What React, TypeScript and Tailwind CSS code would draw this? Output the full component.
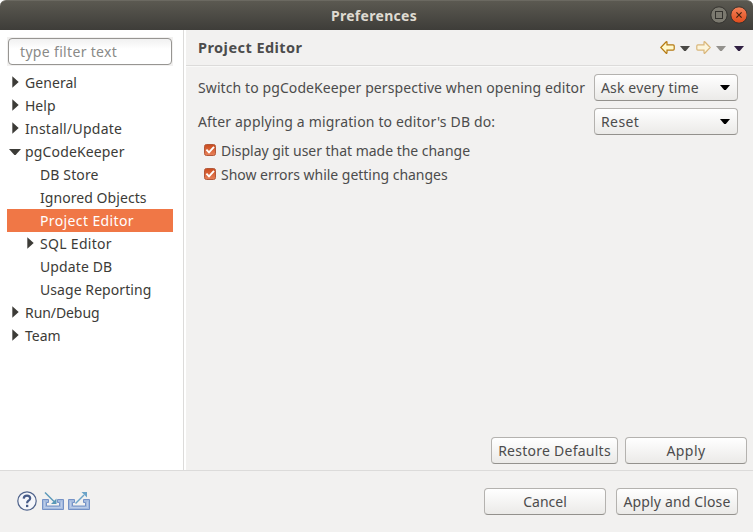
import React from "react";

const RightTriangle = () => (
  <svg width="7" height="12" viewBox="0 0 7 12" className="-mt-px block">
    <path d="M0.3 0.3 6.7 6 0.3 11.7z" fill="#3c3b37" />
  </svg>
);

const DownTriangle = ({ color = "#3c3b37", className = "" }: { color?: string; className?: string }) => (
  <svg width="10" height="5" viewBox="0 0 10 5" className={"block shrink-0 " + className}>
    <path d="M0 0h10L5.8 5H4.2z" fill={color} />
  </svg>
);

type Row = { label: string; level: number; state?: "open" | "closed"; selected?: boolean; tracking: string };

const rows: Row[] = [
  { label: "General", level: 0, state: "closed", tracking: "tracking-[0.06px]" },
  { label: "Help", level: 0, state: "closed", tracking: "tracking-[0px]" },
  { label: "Install/Update", level: 0, state: "closed", tracking: "tracking-[0.25px]" },
  { label: "pgCodeKeeper", level: 0, state: "open", tracking: "tracking-[0.15px]" },
  { label: "DB Store", level: 1, tracking: "tracking-[0.12px]" },
  { label: "Ignored Objects", level: 1, tracking: "tracking-[0.06px]" },
  { label: "Project Editor", level: 1, selected: true, tracking: "tracking-[0.38px]" },
  { label: "SQL Editor", level: 1, state: "closed", tracking: "tracking-[0.3px]" },
  { label: "Update DB", level: 1, tracking: "tracking-[0.12px]" },
  { label: "Usage Reporting", level: 1, tracking: "tracking-[0.07px]" },
  { label: "Run/Debug", level: 0, state: "closed", tracking: "tracking-[-0.08px]" },
  { label: "Team", level: 0, state: "closed", tracking: "tracking-[0px]" },
];

function TreeRow({ row }: { row: Row }) {
  return (
    <div
      className={
        "flex h-[23px] items-center " +
        (row.level === 1 ? "pl-[15px] " : "") +
        (row.selected ? "bg-[#f07746] text-white" : "text-[#3c3b37]")
      }
    >
      <span className={"flex w-[18px] shrink-0 " + (row.state === "open" ? "pl-[3px]" : "pl-[5px]")}>
        {row.state === "closed" && <RightTriangle />}
        {row.state === "open" && (
          <svg width="12" height="6" viewBox="0 0 12 6" className="-ml-px block shrink-0">
            <path d="M0 0h12L6.6 6H5.4z" fill="#3c3b37" />
          </svg>
        )}
      </span>
      <span className={"whitespace-nowrap leading-[23px] " + row.tracking}>{row.label}</span>
    </div>
  );
}

const face =
  "flex h-[27px] items-center rounded-[4px] border border-[#b4b2af] border-b-[#93918d] bg-linear-to-b from-white to-[#ebeae8] text-[#4c4c4c] whitespace-nowrap ";

function Button({ label, className }: { label: string; className: string }) {
  return (
    <button className={face + "justify-center " + className}>
      <span>{label}</span>
    </button>
  );
}

function Select({ value, className }: { value: string; className: string }) {
  return (
    <button className={face + "w-[144px] justify-between pr-[7px] pl-[6px] " + className}>
      <span>{value}</span>
      <DownTriangle color="#000000" />
    </button>
  );
}

function Check({ label, className }: { label: string; className: string }) {
  return (
    <label className="flex h-6 items-center whitespace-nowrap">
      <svg width="12" height="12" viewBox="0 0 12 12" className="mr-[5px] block">
        <defs>
          <linearGradient id="tick" x1="0" y1="0" x2="0" y2="1">
            <stop offset="0" stopColor="#c94a1c" />
            <stop offset="1" stopColor="#e9825a" />
          </linearGradient>
        </defs>
        <rect x="0.5" y="0.5" width="11" height="11" rx="2" fill="url(#tick)" stroke="#b3583a" />
        <path d="M2.4 5.6 5 8.3 10 2.8" fill="none" stroke="#fff" strokeWidth="1.9" />
      </svg>
      <span className={className}>{label}</span>
    </label>
  );
}

function Arrow({ dim = false }: { dim?: boolean }) {
  return (
    <svg width="15" height="13" viewBox="0 0 15 13" className={"block shrink-0 " + (dim ? "-scale-x-100" : "")}>
      <path
        d="M0.8 6.5 6 1q1-.9 1 .4V3.9h6.2q1 0 1 1v3.2q0 1-1 1H7v2.5q0 1.3-1 .4z"
        fill={dim ? "#fcf5dc" : "#fff8cc"}
        stroke={dim ? "#d9b67a" : "#b57a12"}
        strokeWidth="1.2"
      />
    </svg>
  );
}

function TrayIcon({ out = false }: { out?: boolean }) {
  return (
    <svg width="22" height="20" viewBox="0 0 22 20" className="block">
      <path d="M0.5 8.5h6v3h-2v3.5h13v-3.5h-2v-3h6v10h-21z" fill="#a3bade" stroke="#7592c6" />
      <path d="M2.5 10.5v6h17v-6" fill="none" stroke="#bccce8" />
      {out ? (
        <g stroke="#6ba3c8" fill="#6ba3c8">
          <path d="M7.5 12.5 16 4" strokeWidth="1.5" />
          <path d="M13.5 1h5.5v5.5z" stroke="none" />
        </g>
      ) : (
        <g stroke="#5a98b8" fill="#5a98b8">
          <path d="M3 1.5 12 10.5" strokeWidth="1.4" />
          <path d="M14.5 7.5v5.5h-5.5z" stroke="none" />
        </g>
      )}
    </svg>
  );
}

export default function App() {
  return (
    <div className="flex h-[532px] w-[753px] flex-col overflow-hidden bg-[#f2f1f0] font-['Noto_Sans',sans-serif] text-[14px] text-[#4c4c4c]">
      <header className="bg-white">
        <div className="flex h-[30px] items-center rounded-t-[6px] border-t border-[#6b6961] bg-linear-to-b from-[#5b5951] to-[#3e3d39] pr-[6px] pl-[38px]">
          <h1 className="flex-1 text-center text-[14px] font-bold tracking-[0.3px] text-[#dfdbd2]">
            <span>Preferences</span>
          </h1>
          <svg width="37" height="19" viewBox="0 0 37 19" className="block">
            <defs>
              <linearGradient id="close" x1="0" y1="0" x2="0" y2="1">
                <stop offset="0" stopColor="#f5835a" />
                <stop offset="1" stopColor="#df4a1b" />
              </linearGradient>
            </defs>
            <circle cx="9" cy="9" r="8.2" fill="#7b796f" stroke="#33322e" />
            <rect x="5.5" y="5.5" width="7" height="7" fill="none" stroke="#33322e" />
            <circle cx="29" cy="9" r="8.2" fill="url(#close)" stroke="#33322e" />
            <path d="m26.4 6.4 5.2 5.2m0-5.2-5.2 5.2" stroke="#42220f" strokeWidth="1.2" />
          </svg>
        </div>
      </header>

      <div className="flex h-[440px]">
        <aside className="w-[184px] shrink-0 border-r border-[#dcdbda] bg-white pr-[10px] pl-[7px]">
          <div className="mt-[7px] h-[29px] bg-[#f2f1f0] p-px">
            <div className="flex h-[27px] items-center rounded-[4px] border border-[#979592] bg-linear-to-b from-[#f1f1f1] to-white to-40% pl-[11px] text-[#8a8a88]">
              <span className="tracking-[0.33px] whitespace-nowrap">type filter text</span>
            </div>
          </div>
          <nav className="mt-[5px]">
            {rows.map((r) => (
              <TreeRow key={r.label} row={r} />
            ))}
          </nav>
        </aside>

        <main className="flex min-w-0 flex-1 flex-col border-l-2 border-white">
          <div className="flex h-9 items-center border-b border-[#dcdbda] pr-[9px] pl-3">
            <h2 className="flex-1 text-[14.5px] font-bold tracking-[0.45px]">
              <span>Project Editor</span>
            </h2>
            <Arrow />
            <DownTriangle className="mt-px mr-[6px] ml-[5px]" color="#4a4945" />
            <Arrow dim />
            <DownTriangle className="mt-px mr-[8px] ml-[5px]" color="#93918d" />
            <DownTriangle className="mt-px" color="#302042" />
          </div>
          <div className="border-t border-[#f9f9f8] pt-[7px] pr-[15px] pl-3">
            <div className="flex h-[27px] items-center justify-between">
              <span className="tracking-[0.095px] whitespace-nowrap">
                Switch to pgCodeKeeper perspective when opening editor
              </span>
              <Select value="Ask every time" className="tracking-[0.15px]" />
            </div>
            <div className="mt-[7px] flex h-[27px] items-center justify-between">
              <span className="tracking-[0.16px] whitespace-nowrap">After applying a migration to editor's DB do:</span>
              <Select value="Reset" className="tracking-[0.4px]" />
            </div>
            <div className="mt-[3px] pl-[6px]">
              <Check label="Display git user that made the change" className="tracking-[-0.025px]" />
              <Check label="Show errors while getting changes" className="tracking-[-0.03px]" />
            </div>
          </div>
          <div className="mt-auto flex justify-end gap-[7px] pr-[6px] pb-[6px]">
            <Button label="Restore Defaults" className="w-[127px] tracking-[0.25px]" />
            <Button label="Apply" className="w-[122px] tracking-[0.45px]" />
          </div>
        </main>
      </div>

      <footer className="flex h-[62px] items-center border-t border-[#dcdbda] pr-[15px] pl-[17px]">
        <svg width="20" height="20" viewBox="0 0 20 20" className="-mt-[2px] block">
          <circle cx="10" cy="10" r="9.2" fill="#f5f6fa" stroke="#50648c" strokeWidth="1.2" />
          <path d="M6.7 7.6Q6.9 4.6 10 4.6q3.2 0 3.2 2.6 0 1.6-1.8 2.6-1.3.8-1.3 2.4" fill="none" stroke="#465b88" strokeWidth="2.2" />
          <rect x="9" y="13.8" width="2.3" height="2.3" fill="#465b88" />
        </svg>
        <span className="-mt-px ml-[5px]">
          <TrayIcon />
        </span>
        <span className="-mt-px ml-1">
          <TrayIcon out />
        </span>
        <div className="ml-auto flex gap-[10px]">
          <Button label="Cancel" className="w-[122px]" />
          <Button label="Apply and Close" className="w-[122px] tracking-[0.14px]" />
        </div>
      </footer>
    </div>
  );
}
